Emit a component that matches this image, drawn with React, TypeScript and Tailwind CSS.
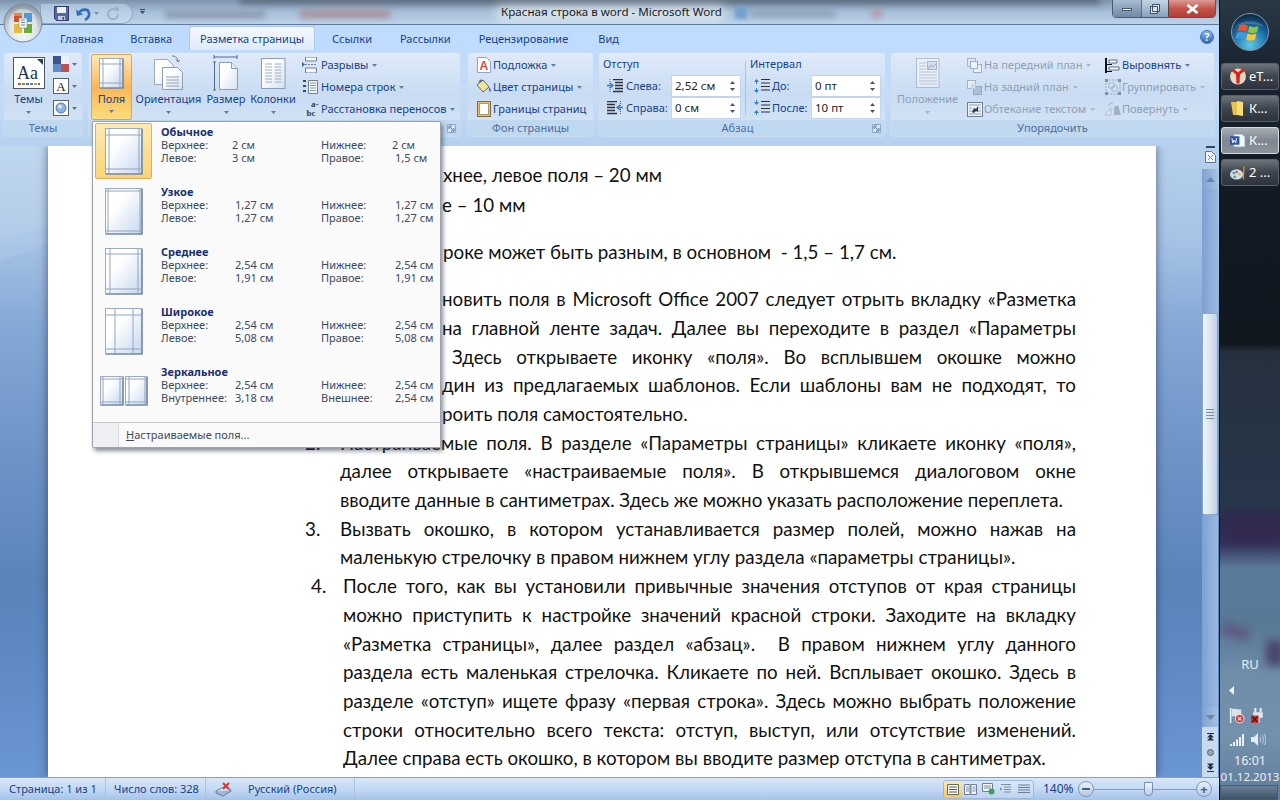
import type { ReactNode } from 'react'

function Caret({ color = '#5f7595' }: { color?: string }) {
  return (
    <svg width="5" height="3" viewBox="0 0 5 3" className="shrink-0">
      <path d="M0 0h5L2.500 3z" fill={color} />
    </svg>
  )
}

function PageGrad({ id, to = '#c4d6ee' }: { id: string; to?: string }) {
  return (
    <defs>
      <linearGradient id={id} x1="0" y1="0" x2="1" y2="1">
        <stop offset="0.35" stopColor="#ffffff" />
        <stop offset="1" stopColor={to} />
      </linearGradient>
    </defs>
  )
}

// page thumbnail with margin guides, used in the ribbon and in the dropdown
function MarginPage({ w = 38, h = 47, l, r, t, b }: { w?: number; h?: number; l: number; r: number; t: number; b: number }) {
  return (
    <svg width={w} height={h} viewBox={`0 0 ${w} ${h}`} className="shrink-0">
      <PageGrad id="mp" />
      <rect x="0.5" y="0.5" width={w - 1.5} height={h - 1.5} fill="url(#mp)" stroke="#9aabc2" />
      <path d={`M${w - 1} 1V${h - 1}H1`} fill="none" stroke="#5f7796" strokeWidth="1.2" />
      <path d={`M${l} 1V${h - 1}M${w - r} 1V${h - 1}M1 ${t}H${w - 1}M1 ${h - b}H${w - 1}`} stroke="#92a5bf" strokeWidth="1" fill="none" />
    </svg>
  )
}

function MirrorPages() {
  return (
    <div className="flex w-[48px] shrink-0 gap-px">
      <MarginPage w={24} h={30} l={3} r={4} t={3} b={4} />
      <MarginPage w={23} h={30} l={4} r={3} t={3} b={4} />
    </div>
  )
}

function OfficeButton() {
  return (
    <svg width="40" height="40" viewBox="0 0 40 40" className="shrink-0">
      <defs>
        <radialGradient id="ob" cx="0.5" cy="0.75" r="0.7">
          <stop offset="0" stopColor="#ffffff" />
          <stop offset="0.55" stopColor="#d4dce4" />
          <stop offset="1" stopColor="#8e99a6" />
        </radialGradient>
      </defs>
      <circle cx="20" cy="20" r="19" fill="url(#ob)" stroke="#7b8794" />
      <circle cx="20" cy="20" r="14" fill="#e8edf1" opacity="0.5" />
      <path d="M11 10h8v9h-8z" fill="#d3542a" />
      <path d="M11 10h8v3h-8z" fill="#e98a3a" />
      <path d="M21 10h8v9h-8z" fill="#4b9bd6" />
      <path d="M11 21h8v9h-8z" fill="#e9b93a" />
      <path d="M21 21h8v9h-8z" fill="#6cae3e" />
      <path d="M16 15h8v10h-8z" fill="#f7f7f2" stroke="#7c8a99" strokeWidth="0.6" />
      <path d="M18 17h4M18 19.5h4M18 22h4" stroke="#5b88b8" strokeWidth="1" />
    </svg>
  )
}

function SaveIcon() {
  return (
    <svg width="15" height="15" viewBox="0 0 15 15">
      <path d="M.5.5h14v14H2.5l-2-2z" fill="#5468a8" stroke="#2f3d74" />
      <path d="M3 1h9v6H3z" fill="#eef2f8" />
      <path d="M4 10h7v4H4z" fill="#c3cbdd" />
      <path d="M8.5 11h1.5v2.5H8.5z" fill="#34406f" />
    </svg>
  )
}

function UndoIcon({ color = '#2d6fb8', opacity = 1 }: { color?: string; opacity?: number }) {
  return (
    <svg width="15" height="14" viewBox="0 0 15 14" opacity={opacity}>
      <path d="M3 6c2-4 9-5 10 0 .6 3-1.5 5.500-4 7" fill="none" stroke={color} strokeWidth="2.600" />
      <path d="M0 2.500l1 6.500 6-1.500z" fill={color} />
    </svg>
  )
}

function RedoIcon() {
  return (
    <svg width="13" height="13" viewBox="0 0 13 13" opacity="0.55">
      <path d="M9.500 3.500A5 5 0 1 0 11 7" fill="none" stroke="#8798ad" strokeWidth="2" />
      <path d="M7.500 0l4.500 .5-.5 4.500z" fill="#8798ad" />
    </svg>
  )
}

function ThemeIcon() {
  return (
    <div className="flex h-[32px] w-[32px] flex-col items-center border border-[#4d5763] bg-white">
      <svg width="30" height="30" viewBox="0 0 30 30">
        <path d="M23 1h6v6z" fill="#33415e" />
        <text x="3" y="21" fontSize="18" fontFamily="Liberation Serif" fill="#22325c">Aa</text>
        <path d="M4 25h3v2H4z" fill="#c9553f" />
        <path d="M8 25h3v2H8z" fill="#6f9a4a" />
        <path d="M12 25h3v2h-3z" fill="#7a5fa3" />
        <path d="M16 25h3v2h-3z" fill="#3f8fb4" />
        <path d="M20 25h3v2h-3z" fill="#e0933a" />
        <path d="M24 25h2v2h-2z" fill="#4a6db0" />
      </svg>
    </div>
  )
}

function ColorsIcon() {
  return (
    <svg width="16" height="16" viewBox="0 0 16 16">
      <path d="M0 0h8v8H0z" fill="#3b5490" />
      <path d="M8 0h8v8H8z" fill="#eef2f8" />
      <path d="M0 8h8v8H0z" fill="#5f8bc8" />
      <path d="M8 8h8v8H8z" fill="#c0504d" />
    </svg>
  )
}

function FontIconBox() {
  return (
    <div className="flex h-[16px] w-[16px] items-center justify-center border border-[#56606d] bg-white font-['Liberation_Serif',serif] text-[13px] leading-none text-[#1b1b1b]">
      A
    </div>
  )
}

function EffectsIconBox() {
  return (
    <div className="flex h-[16px] w-[16px] items-center justify-center border border-[#56606d] bg-white">
      <svg width="12" height="12" viewBox="0 0 12 12">
        <circle cx="6" cy="6" r="5" fill="#8fb2e0" stroke="#4f78b5" />
        <circle cx="5" cy="4.500" r="2" fill="#dce8f7" />
      </svg>
    </div>
  )
}

function OrientIcon() {
  return (
    <svg width="30" height="36" viewBox="0 0 30 36">
      <PageGrad id="ori" to="#d5e0ee" />
      <path d="M.5 4.500h13l6 6v19H.5z" fill="url(#ori)" stroke="#9aa9bd" />
      <path d="M8.500 12.500h15l5 5v17h-20z" fill="url(#ori)" stroke="#8d9db3" />
      <path d="M12 22h13M12 25h13M12 28h13M12 31h13" stroke="#8aa0ba" />
      <path d="M18 1c4 0 5.500 2 6 5M24 7l-2-2.500M24 7l2-2" fill="none" stroke="#5d7da3" />
    </svg>
  )
}

function SizeIcon() {
  return (
    <svg width="26" height="38" viewBox="0 0 26 38">
      <PageGrad id="siz" to="#d5e0ee" />
      <path d="M1 3h23M1 1v4M24 1v4" stroke="#4e6a8e" fill="none" />
      <path d="M1.500 8v28M0 8h3M0 36h3" stroke="#4e6a8e" fill="none" />
      <path d="M6.500 8.500h12l6 6v21h-18z" fill="url(#siz)" stroke="#8d9db3" />
      <path d="M18.500 8.500v6h6" fill="#e9eef5" stroke="#8d9db3" />
    </svg>
  )
}

function ColumnsIcon() {
  return (
    <svg width="25" height="31" viewBox="0 0 25 31">
      <PageGrad id="col" to="#d5e0ee" />
      <rect x="0.500" y="0.500" width="23.500" height="30" fill="url(#col)" stroke="#8d9db3" />
      <path d="M4 6h7M4 9h7M4 12h7M4 15h7M4 18h7M4 21h7M4 24h7M13.500 6h7M13.500 9h7M13.500 12h7M13.500 15h7M13.500 18h7M13.500 21h7M13.500 24h7" stroke="#9db0c6" />
    </svg>
  )
}

function BreaksIcon() {
  return (
    <svg width="16" height="16" viewBox="0 0 16 16">
      <path d="M3.500 0h11v4h-11zM3.500 11h11v5h-11z" fill="#f4f7fb" stroke="#6f7f95" />
      <path d="M3 7.500h12" stroke="#6f7f95" strokeDasharray="2 1" />
      <path d="M0 5v5l3-2.500z" fill="#2f66ac" />
    </svg>
  )
}

function LineNumIcon() {
  return (
    <svg width="16" height="16" viewBox="0 0 16 16">
      <path d="M6.500 1.500h9v13h-9z" fill="#f4f7fb" stroke="#6f7f95" />
      <path d="M8 4h6M8 6.500h6M8 9h6M8 11.500h6" stroke="#8598b0" />
      <path d="M1 1h3v2H1zM1 6h3v2H1zM1 11h3v2H1z" fill="#3a4a62" />
    </svg>
  )
}

function HyphenIcon() {
  return (
    <div className="flex w-[17px] flex-col items-end font-['Liberation_Serif',serif] text-[9px] font-bold leading-[9px] text-[#2f3c52]">
      <span>a-</span>
      <span className="pr-[3px]">bc</span>
    </div>
  )
}

function SheetIcon({ kind }: { kind: 'wm' | 'color' | 'border' }) {
  if (kind === 'color') {
    return (
      <svg width="16" height="16" viewBox="0 0 16 16">
        <path d="M1 6l6-5 6 7-6 5z" fill="#f6e39a" stroke="#6d6a58" />
        <path d="M3 3l3-2" stroke="#4d6ea3" strokeWidth="2" />
        <path d="M13 8c2 2 2.500 3.500 1.500 4.500S12.500 12 13 8z" fill="#3d7cc4" />
      </svg>
    )
  }
  if (kind === 'wm') {
    return (
      <svg width="14" height="16" viewBox="0 0 14 16">
        <path d="M.5.500h9l4 4v11H.5z" fill="#fff" stroke="#94a5ba" />
        <text x="2.500" y="13" fontSize="12" fontFamily="Liberation Sans" fill="#d3484a" fontWeight="700">A</text>
      </svg>
    )
  }
  return (
    <svg width="14" height="16" viewBox="0 0 14 16">
      <rect x="0.500" y="0.500" width="13" height="15" fill="#f0c36a" stroke="#7d6d3d" />
      <rect x="2.500" y="2.500" width="9" height="11" fill="#fff" stroke="#a79a72" />
    </svg>
  )
}

function IndentIcon({ dir, kind }: { dir: 'in' | 'out'; kind: 'indent' | 'space' }) {
  if (kind === 'indent') {
    return (
      <svg width="17" height="14" viewBox="0 0 17 14">
        {dir === 'in' ? (
          <>
            <path d="M6 .5h10M8 3.500h8M8 6.500h8M8 9.500h8M6 12.500h10" stroke="#2c3340" strokeWidth="1.300" />
            <path d="M0 6.500h5M3 4l3 2.500-3 2.500" fill="none" stroke="#3a7ac0" strokeWidth="1.300" />
            <path d="M3 0v13" stroke="#4f5a6a" strokeDasharray="1 1" />
          </>
        ) : (
          <>
            <path d="M0 .5h10M0 3.500h8M0 6.500h8M0 9.500h8M0 12.500h10" stroke="#2c3340" strokeWidth="1.300" />
            <path d="M16 6.500h-5M13 4l-3 2.500 3 2.500" fill="none" stroke="#3a7ac0" strokeWidth="1.300" />
            <path d="M13.500 0v13" stroke="#4f5a6a" strokeDasharray="1 1" />
          </>
        )}
      </svg>
    )
  }
  return (
    <svg width="17" height="16" viewBox="0 0 17 16">
      <path d="M8 1.500h9M8 5h9M8 8.500h9M8 12h9" stroke="#2c3340" strokeWidth="1.200" />
      {dir === 'in' ? (
        <>
          <path d="M3.500 1l2.500 3H1z" fill="#3a7ac0" />
          <path d="M3.500 15L6 12H1z" fill="#3a7ac0" />
          <path d="M3.500 4v2M3.500 10v2" stroke="#3a7ac0" />
        </>
      ) : (
        <>
          <path d="M3.500 5L6 2H1z" fill="#3a7ac0" />
          <path d="M3.500 10l2.500 3H1z" fill="#3a7ac0" />
          <path d="M3.500 0v2M3.500 13v2" stroke="#3a7ac0" />
        </>
      )}
    </svg>
  )
}

function ArrangeIcon({ kind }: { kind: 'front' | 'back' | 'wrap' | 'align' | 'group' | 'rotate' }) {
  if (kind === 'wrap') {
    return (
      <svg width="16" height="15" viewBox="0 0 16 15">
        <rect x="0.500" y="0.500" width="15" height="14" fill="#eef3f9" stroke="#6e7f96" />
        <path d="M2 3h12M2 12h12M2 6h3M11 6h3M2 9h3M11 9h3" stroke="#8ea1b9" />
        <path d="M5 10l2-4 2 1 2-3v6l-2-1-2 2z" fill="#2f3b4d" />
      </svg>
    )
  }
  if (kind === 'align') {
    return (
      <svg width="15" height="15" viewBox="0 0 15 15">
        <path d="M1 0v15" stroke="#111" strokeWidth="2" />
        <path d="M4 2h8v3H4zM4 9h10v3H4z" fill="#fff" stroke="#5b6b82" />
        <path d="M2 6.500h5M2 13.500h5" stroke="#111" />
      </svg>
    )
  }
  if (kind === 'group') {
    return (
      <svg width="16" height="16" viewBox="0 0 16 16" opacity="0.65">
        <path d="M1 1h14v14H1z" fill="none" stroke="#7d8ea3" strokeDasharray="2 1" />
        <path d="M4 4h5v5H4zM7 7h5v5H7z" fill="#e8eef6" stroke="#8699b1" />
        <path d="M0 0h3v3H0zM13 0h3v3h-3zM0 13h3v3H0zM13 13h3v3h-3z" fill="#53667f" />
      </svg>
    )
  }
  if (kind === 'rotate') {
    return (
      <svg width="16" height="14" viewBox="0 0 16 14" opacity="0.7">
        <path d="M0 13h6V6z" fill="#e8eef6" stroke="#a0aebf" />
        <path d="M9 13h7l-3-10-4 2z" fill="#8e9eb3" />
        <path d="M3 4c1-2 3-3 5-3" fill="none" stroke="#8e9eb3" />
      </svg>
    )
  }
  const front = kind === 'front'
  return (
    <svg width="15" height="15" viewBox="0 0 15 15" opacity="0.65">
      <rect x="0.500" y="0.500" width="8" height="8" fill={front ? '#dfe7f1' : '#f2f5f9'} stroke="#8c9cb1" />
      <rect x="6.500" y="6.500" width="8" height="8" fill={front ? '#f2f5f9' : '#9fb0c6'} stroke="#7f90a7" />
      {front ? <rect x="3.500" y="3.500" width="7" height="7" fill="#fafbfd" stroke="#7f90a7" /> : <rect x="3.500" y="3.500" width="5" height="5" fill="#cfd9e6" />}
    </svg>
  )
}

function PositionIcon() {
  return (
    <svg width="24" height="30" viewBox="0 0 24 30" opacity="0.6">
      <rect x="0.500" y="0.500" width="22.500" height="29" fill="#f6f8fb" stroke="#93a4ba" />
      <path d="M3 5h7M3 8h7M3 11h7M3 14h18M3 17h18M3 20h18M3 23h18M3 26h18" stroke="#a0b0c4" />
      <rect x="11.500" y="3.500" width="9" height="8" fill="#d2dbe7" stroke="#8497ae" />
      <path d="M12 11l3-4 2 2 3-3" fill="none" stroke="#6e8199" />
    </svg>
  )
}

function Launcher() {
  return (
    <svg width="9" height="9" viewBox="0 0 9 9" className="shrink-0">
      <path d="M.5.5h8v8h-8z" fill="#d9e6f5" stroke="#8ea8c8" />
      <path d="M2 2h3M2 2v3M3 3l3.500 3.500M7 4v3H4" fill="none" stroke="#5b7ba3" />
    </svg>
  )
}

function Group({ w, label, launcher, children }: { w: string; label: string; launcher?: boolean; children: ReactNode }) {
  return (
    <div className={`${w} flex h-[85px] shrink-0 flex-col overflow-hidden rounded-[3px] border border-[#c6daf0] bg-gradient-to-b from-[#dfeafa] via-[#c9dcf3] to-[#d7e5f6]`}>
      <div className="flex min-h-0 flex-1">{children}</div>
      <div className="flex h-[16px] shrink-0 items-center bg-[#c1d8f1] px-[4px] text-[#4d6f9e]">
        <span className="flex-1 text-center">{label}</span>
        {launcher ? <Launcher /> : null}
      </div>
    </div>
  )
}

function BigButton({ w, icon, label, muted, active }: { w: string; icon: ReactNode; label: string; muted?: boolean; active?: boolean }) {
  return (
    <div className={`${w} flex h-[66px] shrink-0 flex-col items-center rounded-[2px] ${active ? 'mt-[1px] border border-[#dca35a] bg-gradient-to-b from-[#fce9b8] via-[#f9b657] to-[#fbdc7d]' : 'mt-[2px]'}`}>
      <div className="flex h-[36px] items-center justify-center">{icon}</div>
      <div className={`leading-[15px] whitespace-nowrap ${muted ? 'text-[#8e9fb5]' : 'text-[#15428b]'}`}>{label}</div>
      <div className="flex flex-1 items-center pb-[3px]">
        <Caret color={muted ? '#a3b2c6' : '#567db1'} />
      </div>
    </div>
  )
}

function SmallRow({ icon, label, caret = true, tone = 'text-[#15428b]', iconW = 'w-[20px]', gap = 'gap-[4px]' }: { icon: ReactNode; label: string; caret?: boolean; tone?: string; iconW?: string; gap?: string }) {
  return (
    <div className="flex h-[22px] items-center">
      <div className={`${iconW} flex shrink-0 justify-center`}>{icon}</div>
      <div className={`flex items-center ${gap} pl-[1px] whitespace-nowrap ${tone}`}>
        <span>{label}</span>
        {caret ? <Caret color={tone.includes('9') ? '#a9b7c9' : '#5f7fae'} /> : null}
      </div>
    </div>
  )
}

function Spinner({ value }: { value: string }) {
  return (
    <div className="flex h-[22px] w-[70px] items-center justify-between border border-[#c4d5eb] bg-white pl-[3px] pr-[4px] text-[#1e1e1e]">
      <span className="text-[11.500px]">{value}</span>
      <div className="flex flex-col gap-[4px] pr-[1px]">
        <svg width="5" height="3" viewBox="0 0 5 3"><path d="M0 3h5L2.500 0z" fill="#44546c" /></svg>
        <Caret color="#44546c" />
      </div>
    </div>
  )
}

function Ribbon() {
  return (
    <div className="flex h-[96px] shrink-0 items-start gap-0 bg-gradient-to-b from-[#bfdbff] via-[#c6dcf8] to-[#b5d0f0] px-[3px] pt-[2px]">
      <Group w="w-[80px]" label="Темы">
        <div className="flex w-[49px] justify-center">
          <BigButton w="w-[42px]" icon={<ThemeIcon />} label="Темы" />
        </div>
        <div className="flex flex-col">
          {[<ColorsIcon key="c" />, <FontIconBox key="f" />, <EffectsIconBox key="e" />].map((ico, i) => (
            <div key={i} className="flex h-[22px] items-center gap-[3px]">
              {ico}
              <Caret />
            </div>
          ))}
        </div>
      </Group>
      <div className="w-[5px] shrink-0" />
      <Group w="w-[373px]" label="Параметры страницы" launcher>
        <div className="flex pl-[2px]">
          <BigButton active w="w-[41px]" icon={<MarginPage w={25} h={31} l={4} r={4} t={6} b={6} />} label="Поля" />
          <div className="w-[3px]" />
          <BigButton w="w-[67px]" icon={<OrientIcon />} label="Ориентация" />
          <div className="w-[5px]" />
          <BigButton w="w-[38px]" icon={<SizeIcon />} label="Размер" />
          <div className="w-[5px]" />
          <BigButton w="w-[46px]" icon={<ColumnsIcon />} label="Колонки" />
        </div>
        <div className="flex flex-col pl-[4px] pt-[1px]">
          <SmallRow icon={<BreaksIcon />} label="Разрывы" />
          <SmallRow icon={<LineNumIcon />} label="Номера строк" />
          <SmallRow icon={<HyphenIcon />} label="Расстановка переносов" />
        </div>
      </Group>
      <div className="w-[6px] shrink-0" />
      <Group w="w-[127px]" label="Фон страницы">
        <div className="flex flex-col pl-[8px] pt-[1px]">
          <SmallRow iconW="w-[16px]" icon={<SheetIcon kind="wm" />} label="Подложка" />
          <SmallRow iconW="w-[16px]" icon={<SheetIcon kind="color" />} label="Цвет страницы" />
          <SmallRow iconW="w-[16px]" icon={<SheetIcon kind="border" />} label="Границы страниц" caret={false} />
        </div>
      </Group>
      <div className="w-[4px] shrink-0" />
      <Group w="w-[288px]" label="Абзац" launcher>
        <div className="flex flex-col pl-[4px] pt-[1px]">
          <div className="flex h-[21px] items-center text-[#15428b]">Отступ</div>
          <div className="flex h-[22px] items-center">
            <div className="flex w-[22px] justify-center pl-[2px]"><IndentIcon dir="in" kind="indent" /></div>
            <span className="w-[46px] pl-[1px] text-[#15428b]">Слева:</span>
            <Spinner value="2,52 см" />
          </div>
          <div className="flex h-[22px] items-center">
            <div className="flex w-[22px] justify-center pl-[2px]"><IndentIcon dir="out" kind="indent" /></div>
            <span className="w-[46px] pl-[1px] text-[#15428b]">Справа:</span>
            <Spinner value="0 см" />
          </div>
        </div>
        <div className="ml-[4px] mt-[8px] h-[54px] w-px bg-[#a8c2e2]" />
        <div className="flex flex-col pl-[4px] pt-[1px]">
          <div className="flex h-[21px] items-center text-[#15428b]">Интервал</div>
          <div className="flex h-[22px] items-center">
            <div className="flex w-[21px] justify-center pl-[1px]"><IndentIcon dir="in" kind="space" /></div>
            <span className="w-[40px] pl-[1px] text-[#15428b]">До:</span>
            <Spinner value="0 пт" />
          </div>
          <div className="flex h-[22px] items-center">
            <div className="flex w-[21px] justify-center pl-[1px]"><IndentIcon dir="out" kind="space" /></div>
            <span className="w-[40px] pl-[1px] text-[#15428b]">После:</span>
            <Spinner value="10 пт" />
          </div>
        </div>
      </Group>
      <div className="w-[4px] shrink-0" />
      <Group w="w-[325px]" label="Упорядочить">
        <div className="flex pl-[5px]">
          <BigButton muted w="w-[63px]" icon={<PositionIcon />} label="Положение" />
        </div>
        <div className="flex w-[145px] flex-col pl-[7px] pt-[1px]">
          <SmallRow iconW="w-[17px]" tone="text-[#8e9fb5]" icon={<ArrangeIcon kind="front" />} label="На передний план" />
          <SmallRow iconW="w-[17px]" tone="text-[#8e9fb5]" icon={<ArrangeIcon kind="back" />} label="На задний план" />
          <SmallRow iconW="w-[17px]" tone="text-[#8e9fb5]" icon={<ArrangeIcon kind="wrap" />} label="Обтекание текстом" />
        </div>
        <div className="flex flex-col pt-[1px]">
          <SmallRow iconW="w-[17px]" icon={<ArrangeIcon kind="align" />} label="Выровнять" />
          <SmallRow iconW="w-[17px]" tone="text-[#8e9fb5]" icon={<ArrangeIcon kind="group" />} label="Группировать" />
          <SmallRow iconW="w-[17px]" tone="text-[#8e9fb5]" icon={<ArrangeIcon kind="rotate" />} label="Повернуть" />
        </div>
      </Group>
    </div>
  )
}

function TitleBar() {
  return (
    <div className="relative h-[25px] shrink-0 overflow-hidden border-b border-[#5f7a99] bg-gradient-to-b from-[#7e94ad] via-[#a7bfd8] to-[#bdd3ea]">
      <div className="absolute left-[240px] top-[-4px] h-[8px] w-[860px] bg-[#5c6b7e] blur-[3px]" />
      <div className="absolute left-[165px] top-[11px] h-[7px] w-[100px] bg-[#8796a9] blur-[3px]" />
      <div className="absolute left-[300px] top-[10px] h-[8px] w-[90px] bg-[#a88f9a] blur-[3px]" />
      <div className="absolute left-[735px] top-[7px] h-[12px] w-[12px] bg-[#6e9fcf] blur-[2px]" />
      <div className="absolute left-[750px] top-[10px] h-[7px] w-[85px] bg-[#8c9fb6] blur-[3px]" />
      <div className="absolute left-[872px] top-[10px] h-[7px] w-[10px] bg-[#b58f98] blur-[3px]" />
      <div className="absolute left-[497px] top-[6px] h-[14px] w-[228px] bg-white/60 blur-[6px]" />
      <div className="relative flex h-full items-center pl-[501px] text-[11.600px] text-[#1a1a1a]">Красная строка в word - Microsoft Word</div>
      <div className="absolute left-[40px] top-[3px] flex h-[21px] w-[93px] items-center rounded-r-[11px] border border-[#8ea3bd] bg-[#cddff3]/50 pl-[13px]">
        <SaveIcon />
        <div className="w-[7px]" />
        <UndoIcon />
        <div className="w-[3px]" />
        <Caret color="#7d90a8" />
        <div className="w-[8px]" />
        <RedoIcon />
      </div>
      <div className="absolute left-[140px] top-[9px] flex flex-col items-center gap-px">
        <div className="h-px w-[5px] bg-[#33465e]" />
        <Caret color="#33465e" />
      </div>
      <div className="absolute left-[1112px] top-[-1px] flex h-[19px] overflow-hidden rounded-b-[4px] border border-[#4c5a6b]">
        <div className="flex w-[28px] items-center justify-center bg-gradient-to-b from-[#a9bdd2] to-[#6f89a7]">
          <div className="mt-[2px] h-[3px] w-[10px] border border-[#46566a] bg-white" />
        </div>
        <div className="flex w-[27px] items-center justify-center border-l border-[#5c6d82] bg-gradient-to-b from-[#c5d5e5] to-[#86a0bc]">
          <svg width="10" height="10" viewBox="0 0 10 10">
            <path d="M2.500.5h7v7h-7zM.5 2.500h7v7h-7z" fill="#dfe7f0" stroke="#3f4f63" />
          </svg>
        </div>
        <div className="flex w-[47px] items-center justify-center border-l border-[#5c4140] bg-gradient-to-b from-[#dc9a92] via-[#c2564d] to-[#b43c32]">
          <svg width="13" height="10" viewBox="0 0 13 10">
            <path d="M1.500 1l10 8M11.500 1l-10 8" stroke="#fff" strokeWidth="2.800" />
          </svg>
        </div>
      </div>
    </div>
  )
}

const TABS: [string, string][] = [
  ['Главная', 'ml-[60px]'],
  ['Вставка', 'ml-[27px]'],
]

const TABS_AFTER: [string, string][] = [
  ['Ссылки', 'ml-[17px]'],
  ['Рассылки', 'ml-[28px]'],
  ['Рецензирование', 'ml-[28px]'],
  ['Вид', 'ml-[30px]'],
]

function TabsRow() {
  return (
    <div className="relative flex h-[25px] shrink-0 items-end bg-[#bfdbff] text-[#15428b]">
      {TABS.map(([label, ml]) => (
        <div key={label} className={`flex h-[23px] items-center whitespace-nowrap pt-[1px] ${ml}`}>{label}</div>
      ))}
      <div className="ml-[17px] flex h-[24px] w-[126px] items-center justify-center rounded-t-[3px] border border-b-0 border-[#a9c7ea] bg-gradient-to-b from-[#f4f9ff] to-[#dfeafa] pt-[1px]">Разметка страницы</div>
      {TABS_AFTER.map(([label, ml]) => (
        <div key={label} className={`flex h-[23px] items-center whitespace-nowrap pt-[1px] ${ml}`}>{label}</div>
      ))}
      <div className="absolute left-[1200px] top-[5px] flex h-[14px] w-[14px] items-center justify-center rounded-full border border-[#3c6fb5] bg-gradient-to-b from-[#8fb9ea] to-[#2a64b8] text-[10px] font-bold leading-none text-white">?</div>
    </div>
  )
}

const MARGINS = [
  { name: 'Обычное', l1: 'Верхнее:', l2: 'Левое:', r1: 'Нижнее:', r2: 'Правое:', a: '2 см', b: '3 см', c: '2 см', d: '1,5 см', page: { l: 4, r: 4, t: 7, b: 6 }, narrow: true, on: true },
  { name: 'Узкое', l1: 'Верхнее:', l2: 'Левое:', r1: 'Нижнее:', r2: 'Правое:', a: '1,27 см', b: '1,27 см', c: '1,27 см', d: '1,27 см', page: { l: 3, r: 3, t: 3, b: 4 } },
  { name: 'Среднее', l1: 'Верхнее:', l2: 'Левое:', r1: 'Нижнее:', r2: 'Правое:', a: '2,54 см', b: '1,91 см', c: '2,54 см', d: '1,91 см', page: { l: 5, r: 5, t: 6, b: 6 } },
  { name: 'Широкое', l1: 'Верхнее:', l2: 'Левое:', r1: 'Нижнее:', r2: 'Правое:', a: '2,54 см', b: '5,08 см', c: '2,54 см', d: '5,08 см', page: { l: 10, r: 10, t: 7, b: 6 } },
  { name: 'Зеркальное', l1: 'Верхнее:', l2: 'Внутреннее:', r1: 'Нижнее:', r2: 'Внешнее:', a: '2,54 см', b: '3,18 см', c: '2,54 см', d: '2,54 см', mirror: true },
]

function MarginsMenu() {
  return (
    <div className="absolute left-[92px] top-[121px] z-20 w-[349px] rounded-[2px] border border-[#9aa4b0] bg-[#fafafa] shadow-[2px_3px_4px_rgba(40,50,70,0.55)]">
      <div className="flex flex-col px-[2px] pt-[1px]">
        {MARGINS.map(m => (
          <div key={m.name} className="flex h-[60px] items-start">
            <div className={`flex h-[56px] w-[57px] shrink-0 items-center justify-center rounded-[2px] ${m.on ? 'border border-[#e0ae5e] bg-gradient-to-b from-[#fde9b0] to-[#fbd477]' : ''}`}>
              {m.mirror ? <MirrorPages /> : <MarginPage l={m.page!.l} r={m.page!.r} t={m.page!.t} b={m.page!.b} />}
            </div>
            <div className="flex-1 pl-[9px] pt-[2px] text-[#3c4a5e]">
              <div className="h-[13px] text-[11px] font-bold leading-[13px] text-[#172f70]">{m.name}</div>
              {[[m.l1, m.a, m.r1, m.c], [m.l2, m.b, m.r2, m.d]].map((row, i) => (
                <div key={i} className="flex h-[13px] leading-[13px]">
                  <span className="w-[74px]">{row[0]}</span>
                  <span className={`w-[86px] ${m.narrow ? 'ml-[-3px]' : ''}`}>{row[1]}</span>
                  <span className={`w-[74px] ${m.narrow ? 'ml-[3px]' : ''}`}>{row[2]}</span>
                  <span className={m.narrow && row[3] === '2 см' ? 'ml-[-3px]' : ''}>{row[3]}</span>
                </div>
              ))}
            </div>
          </div>
        ))}
      </div>
      <div className="mt-[-1px] flex h-[25px] border-t border-[#c5c8cd]">
        <div className="w-[26px] border-r border-[#d9dcdf] bg-[#eef0f1]" />
        <div className="flex items-center pl-[7px] text-[#3c4a5e]">
          <span><span className="underline">Н</span>астраиваемые поля...</span>
        </div>
      </div>
    </div>
  )
}

// only the part of each line that shows to the right of the open menu
const BEHIND_MENU: { t: string; just?: boolean; pl?: string }[] = [
  { t: 'новить поля в Microsoft Office 2007 следует отрыть вкладку «Разметка', just: true },
  { t: 'на главной ленте задач. Далее вы переходите в раздел «Параметры', just: true },
  { t: 'Здесь открываете иконку «поля». Во всплывшем окошке можно', just: true, pl: 'pl-[404px]' },
  { t: 'дин из предлагаемых шаблонов. Если шаблоны вам не подходят, то', just: true },
  { t: 'роить поля самостоятельно.' },
]

const LINES: { n?: string; t: string; just?: boolean }[] = [
  { n: '2.', t: 'Настраиваемые поля. В разделе «Параметры страницы» кликаете иконку «поля»,', just: true },
  { t: 'далее открываете «настраиваемые поля». В открывшемся диалоговом окне', just: true },
  { t: 'вводите данные в сантиметрах. Здесь же можно указать расположение переплета.' },
  { n: '3.', t: 'Вызвать окошко, в котором устанавливается размер полей, можно нажав на', just: true },
  { t: 'маленькую стрелочку в правом нижнем углу раздела «параметры страницы».' },
]

const LINES_4 = [
  { t: 'После того, как вы установили привычные значения отступов от края страницы', just: true, n: '4.' },
  { t: 'можно приступить к настройке значений красной строки. Заходите на вкладку', just: true },
  { t: '«Разметка страницы», далее раздел «абзац».  В правом нижнем углу данного', just: true },
  { t: 'раздела есть маленькая стрелочка. Кликаете по ней. Всплывает окошко. Здесь в', just: true },
  { t: 'разделе «отступ» ищете фразу «первая строка». Здесь можно выбрать положение', just: true },
  { t: 'строки относительно всего текста: отступ, выступ, или отсутствие изменений.', just: true },
  { t: 'Далее справа есть окошко, в котором вы вводите размер отступа в сантиметрах.' },
]

function DocPage() {
  return (
    <div className="relative w-[1108px] shrink-0 self-stretch bg-white pt-[14px] font-['Lato',sans-serif] text-[18.750px] text-[#111] shadow-[0_0_9px_rgba(30,45,70,0.65)]">
      <div className="flex h-[30px] items-center pl-[395px] whitespace-pre">хнее, левое поля – 20 мм</div>
      <div className="flex h-[30px] items-center pl-[394px] whitespace-pre">е – 10 мм</div>
      <div className="mt-[17px] flex h-[30px] items-center pl-[395px] whitespace-pre">роке может быть разным, в основном  - 1,5 – 1,7 см.</div>
      <div className="mt-[18px]">
        {BEHIND_MENU.map((l, i) => (
          <div key={i} className={`flex h-[28.700px] items-center ${l.pl ?? 'pl-[394px]'}`}>
            <span className={`flex-1 pr-[80px] ${l.just ? '[text-align-last:justify]' : ''}`}>{l.t}</span>
          </div>
        ))}
        {LINES.map((l, i) => (
          <div key={i} className="flex h-[28.700px] items-center pl-[257px]">
            <span className="w-[35px] shrink-0">{l.n}</span>
            <span className={`w-[736px] whitespace-pre-wrap ${l.just ? '[text-align-last:justify]' : ''}`}>{l.t}</span>
          </div>
        ))}
        {LINES_4.map((l, i) => (
          <div key={i} className="flex h-[28.700px] items-center pl-[263px]">
            <span className="w-[32px] shrink-0">{l.n}</span>
            <span className={`w-[733px] whitespace-pre-wrap ${l.just ? '[text-align-last:justify]' : ''}`}>{l.t}</span>
          </div>
        ))}
      </div>
    </div>
  )
}

function ScrollTrack() {
  return (
    <div className="flex w-[16px] shrink-0 flex-col self-stretch">
      <div className="flex h-[23px] flex-col items-center">
        <svg width="11" height="2" viewBox="0 0 11 2"><path d="M1 0h9v2H1z" fill="#2f4b6b" /></svg>
        <svg width="11" height="12" viewBox="0 0 11 12" className="mt-[3px]">
          <path d="M.5.5h6l4 4v7h-10z" fill="#eef3f9" stroke="#62758c" />
          <path d="M3 4l5 5M8 4l-5 5" stroke="#7e8fa4" />
        </svg>
      </div>
      <div className="flex h-[20px] items-center justify-center bg-gradient-to-r from-[#7fa2d2] to-[#a6c1e6]">
        <svg width="9" height="5" viewBox="0 0 9 5"><path d="M0 5h9L4.500 0z" fill="#6c86a8" /></svg>
      </div>
      <div className="h-[124px] bg-gradient-to-r from-[#7ea1d2] to-[#9bb8e0]" />
      <div className="flex h-[202px] flex-col items-center justify-center gap-[2px] rounded-[2px] border border-[#8ea6c6] bg-gradient-to-r from-[#f0f5fb] via-[#dbe5f1] to-[#c1d0e2]">
        <div className="h-px w-[8px] bg-[#7b8ea6]" />
        <div className="h-px w-[8px] bg-[#7b8ea6]" />
        <div className="h-px w-[8px] bg-[#7b8ea6]" />
        <div className="h-px w-[8px] bg-[#7b8ea6]" />
      </div>
      <div className="h-[192px] bg-gradient-to-r from-[#7ea1d2] to-[#9bb8e0]" />
      <div className="flex h-[20px] items-center justify-center bg-gradient-to-r from-[#7fa2d2] to-[#a6c1e6]">
        <svg width="9" height="5" viewBox="0 0 9 5"><path d="M0 0h9L4.500 5z" fill="#6c86a8" /></svg>
      </div>
      <div className="flex flex-1 flex-col items-center justify-around bg-[#c8daf0] py-[2px]">
        <svg width="9" height="9" viewBox="0 0 9 9"><path d="M4.500 1l3.500 3.500H1zM4.500 4l3.500 3.500H1z" fill="#1e2d44" /><path d="M1 .5h7" stroke="#1e2d44" /></svg>
        <div className="h-[7px] w-[7px] rounded-full border border-[#5a6675] bg-[#9aa6b4]" />
        <svg width="9" height="9" viewBox="0 0 9 9"><path d="M4.500 4L8 .5H1zM4.500 7L8 3.500H1z" fill="#1e2d44" /><path d="M1 8.500h7" stroke="#1e2d44" /></svg>
      </div>
    </div>
  )
}

function StatusBar() {
  return (
    <div className="flex h-[23px] shrink-0 items-center border-t border-[#7da0cc] bg-gradient-to-b from-[#d8e7fa] via-[#c4d9f4] to-[#a5c3ea] text-[11px] text-[#15428b]">
      <div className="flex h-full w-[106px] items-center border-r border-[#a8c2e4] pl-[9px]">Страница: 1 из 1</div>
      <div className="flex h-full w-[100px] items-center border-r border-[#a8c2e4] pl-[8px]">Число слов: 328</div>
      <div className="flex h-full w-[149px] items-center gap-[16px] border-r border-[#a8c2e4] pl-[9px]">
        <svg width="17" height="15" viewBox="0 0 17 15" className="shrink-0">
          <path d="M1 9l8-4 7 3-8 5z" fill="#e8eef7" stroke="#5f7a9f" />
          <path d="M1 9v2l7 3 8-5V8" fill="#9fb9dc" stroke="#5f7a9f" />
          <path d="M8 1l6 6M14 1L8 7" stroke="#d7362c" strokeWidth="2" />
        </svg>
        <span>Русский (Россия)</span>
      </div>
      <div className="flex-1" />
      <div className="flex h-[19px] w-[91px] items-center overflow-hidden rounded-[3px] border border-[#9db8dc] bg-gradient-to-b from-[#dbe8f8] to-[#bcd3ef]">
        <div className="flex h-full w-[18px] items-center justify-center bg-gradient-to-b from-[#fde9b0] to-[#f9c35e]">
          <svg width="12" height="11" viewBox="0 0 12 11"><path d="M.5.500h11v10H.5z" fill="#fff" stroke="#6b6b5c" /><path d="M2 3h8M2 5.500h8M2 8h8" stroke="#555" /></svg>
        </div>
        <div className="flex h-full w-[18px] items-center justify-center">
          <svg width="13" height="11" viewBox="0 0 13 11"><path d="M.5.500h5.500v10H.5zM7 .5h5.500v10H7z" fill="#f3f6fa" stroke="#6d7f96" /><path d="M2 3h3M2 5h3M2 7h3M8.500 3h3M8.500 5h3M8.500 7h3" stroke="#7f8fa5" /></svg>
        </div>
        <div className="flex h-full w-[18px] items-center justify-center">
          <svg width="13" height="12" viewBox="0 0 13 12"><path d="M.5.500h10v8H.5z" fill="#f3f6fa" stroke="#6d7f96" /><path d="M2 3h7M2 5h7" stroke="#7f8fa5" /><circle cx="9.500" cy="8.500" r="3" fill="#3e9a62" /></svg>
        </div>
        <div className="flex h-full w-[18px] items-center justify-center">
          <svg width="12" height="10" viewBox="0 0 12 10"><path d="M1 .5h10M4 3h7M4 5.500h7M4 8h7" stroke="#7b8da6" /><path d="M0 3v4l2-2z" fill="#7b8da6" /></svg>
        </div>
        <div className="flex h-full w-[18px] items-center justify-center">
          <svg width="12" height="10" viewBox="0 0 12 10"><path d="M0 1h12M0 3.500h12M0 6h12M0 8.500h12" stroke="#6d7f96" /></svg>
        </div>
      </div>
      <span className="ml-[9px] w-[28px] text-[12px]">140%</span>
      <div className="ml-[7px] flex w-[134px] items-center">
        <div className="flex h-[16px] w-[16px] shrink-0 items-center justify-center rounded-full border border-[#7d97b9] bg-gradient-to-b from-[#eaf2fb] to-[#b3c9e6]">
          <div className="h-[2px] w-[8px] bg-[#4a5d78]" />
        </div>
        <div className="relative h-px flex-1 bg-[#7f9cc3]">
          <div className="absolute left-[50px] top-[-7px] h-[14px] w-[9px] rounded-b-[4px] border border-[#7a90ad] bg-gradient-to-b from-[#f2f6fb] to-[#bccde3]" />
        </div>
        <div className="flex h-[16px] w-[16px] shrink-0 items-center justify-center rounded-full border border-[#7d97b9] bg-gradient-to-b from-[#eaf2fb] to-[#b3c9e6] text-[13px] font-bold leading-none text-[#4a5d78]">+</div>
      </div>
      <div className="w-[7px]" />
    </div>
  )
}

function TaskBtn({ icon, label, active }: { icon: ReactNode; label: string; active?: boolean }) {
  return (
    <div className={`flex h-[27px] items-center gap-[3px] rounded-[3px] border pl-[8px] text-[13px] text-white ${active ? 'border-[#d5dbe2] bg-gradient-to-b from-[#a9afb6] via-[#7e868f] to-[#8b929a]' : 'border-[#58626e] bg-gradient-to-b from-[#6e747b] via-[#3d444d] to-[#2c333c]'}`}>
      <div className="flex w-[16px] justify-center">{icon}</div>
      <span>{label}</span>
    </div>
  )
}

function Taskbar() {
  return (
    <div className="relative flex w-[61px] shrink-0 flex-col overflow-hidden border-l border-[#10161f] bg-[linear-gradient(to_bottom,#2a3846_0%,#1a2531_8%,#111a24_25%,#10171f_43%,#26313f_44%,#27364a_63%,#2e2a4e_65%,#33315a_68%,#5a7b9a_71%,#587996_78%,#6f8ca9_84%,#7390ac_92%,#5f7d9c_100%)] font-['Noto_Sans',sans-serif] text-white">
      <div className="absolute left-[2px] top-[626px] h-[12px] w-[28px] rotate-[15deg] bg-[#5c3f6e]/60 blur-[5px]" />
      <div className="absolute left-[46px] top-[640px] h-[26px] w-[18px] bg-[#41345f]/80 blur-[5px]" />
      <div className="absolute left-[10px] top-[520px] h-[20px] w-[50px] bg-[#33294f] blur-[5px]" />
      <div className="relative flex h-[63px] items-center justify-center">
        <svg width="38" height="38" viewBox="0 0 38 38">
          <defs>
            <radialGradient id="orb" cx="0.5" cy="0.85" r="0.8">
              <stop offset="0" stopColor="#62c8ea" />
              <stop offset="0.6" stopColor="#1a6ea8" />
              <stop offset="1" stopColor="#0b2a47" />
            </radialGradient>
          </defs>
          <circle cx="19" cy="19" r="18.500" fill="url(#orb)" stroke="#8698a9" />
          <path d="M8 13c3-2 6-2 9-.5l-1.500 6c-3-1.500-6-1.500-9 0z" fill="#e8542e" />
          <path d="M18.500 13c3 1.500 6 1.500 9 0l-1.500 6c-3 1.500-6 1.500-9 0z" fill="#8dc63f" />
          <path d="M6 20c3-1.500 6-1.500 9 0l-1.500 6c-3-1.500-6-1.500-9 0z" fill="#3d9ae0" />
          <path d="M16.500 20.500c3 1.500 6 1.500 9 0L24 26.500c-3 1.500-6 1.500-9 0z" fill="#fcc42f" />
          <path d="M5 14a15 9 0 0 1 28 0c-8-4-20-4-28 0z" fill="#fff" opacity="0.18" />
        </svg>
      </div>
      <div className="relative flex flex-col gap-[5px] px-[1px]">
        <TaskBtn label="eT..." icon={
          <svg width="16" height="17" viewBox="0 0 16 17">
            <circle cx="8" cy="8.500" r="8" fill="#e8d6c4" />
            <path d="M1 2.500l5 4 .5 9h3L10 6.500l5-4-2.500-2L8 4.500 3.500.5z" fill="#d8231d" />
          </svg>
        } />
        <TaskBtn label="К..." icon={
          <svg width="14" height="17" viewBox="0 0 14 17">
            <path d="M0 2h8v13H2z" fill="#e6c14f" />
            <path d="M6 1l6 1v14l-6-1z" fill="#f6de7e" />
          </svg>
        } />
        <TaskBtn active label="К..." icon={
          <svg width="17" height="17" viewBox="0 0 17 17">
            <path d="M4 1.500h9l3 3v11H4z" fill="#f4f7fb" stroke="#8c9aac" />
            <path d="M0 4h10v9H0z" fill="#2f55ad" />
            <path d="M2 6l1 5 1.500-3L6 11l1-5" fill="none" stroke="#fff" />
          </svg>
        } />
        <TaskBtn label="2 ..." icon={
          <svg width="17" height="16" viewBox="0 0 17 16">
            <ellipse cx="7" cy="9.500" rx="7" ry="5.500" fill="#cfdde9" />
            <circle cx="4" cy="8" r="1.300" fill="#3f8ed0" />
            <circle cx="7" cy="7" r="1.300" fill="#d94a3a" />
            <circle cx="10" cy="9" r="1.300" fill="#e7b52e" />
            <circle cx="5" cy="12" r="1.300" fill="#4d9e4a" />
            <path d="M14 1l1.500 0-.5 14h-1.500z" fill="#dc8a2a" />
          </svg>
        } />
      </div>
      <div className="flex-1" />
      <div className="relative flex h-[24px] items-center justify-center text-[13px] text-[#e4ebf2]">RU</div>
      <div className="relative flex h-[26px] items-center pl-[9px]">
        <svg width="5" height="9" viewBox="0 0 5 9"><path d="M5 0v9L0 4.500z" fill="#eef2f6" /></svg>
      </div>
      <div className="relative flex h-[24px] items-center justify-between pl-[8px] pr-[14px]">
        <svg width="18" height="17" viewBox="0 0 16 16">
          <path d="M2 1v14" stroke="#e9eef3" strokeWidth="1.500" />
          <path d="M3 2c3-1 5 1 9 0v7c-4 1-6-1-9 0z" fill="#dbe2ea" />
          <circle cx="10.500" cy="11" r="4" fill="#cf3a3a" stroke="#f4dada" />
          <path d="M9 9.500l3 3M12 9.500l-3 3" stroke="#fff" />
        </svg>
        <svg width="16" height="17" viewBox="0 0 15 16">
          <path d="M3 5h9v5H9v5H6v-5H3z" fill="#e3e8ee" />
          <path d="M5 1v4M10 1v4" stroke="#e3e8ee" strokeWidth="2" />
          <path d="M1 8h7v7H1z" fill="#cf2a2a" />
          <path d="M2 9l5 5M7 9l-5 5" stroke="#2a1212" />
        </svg>
      </div>
      <div className="relative flex h-[25px] items-center justify-between pl-[10px] pr-[14px]">
        <svg width="14" height="12" viewBox="0 0 14 12">
          <path d="M0 10h2v2H0zM3 8h2v4H3zM6 5.500h2V12H6zM9 3h2v9H9zM12 0h2v12h-2z" fill="#eef2f6" />
        </svg>
        <svg width="15" height="13" viewBox="0 0 15 13">
          <path d="M0 4h3l4-4v13L3 9H0z" fill="#e6ebf0" />
          <path d="M9 4c1 1.500 1 3.500 0 5M11 2.500c2 2 2 6 0 8M13 1c2.500 3 2.500 8 0 11" fill="none" stroke="#cbd4de" />
        </svg>
      </div>
      <div className="relative text-center text-[12.500px] leading-[17px] text-[#eef2f6]">16:01</div>
      <div className="relative text-center text-[11.500px] leading-[16px] text-[#eef2f6]">01.12.2013</div>
      <div className="relative mr-[2px] h-[15px] border border-[#4a5a6e] bg-gradient-to-b from-[#6e8198] to-[#3c5068]" />
    </div>
  )
}

export default function App() {
  return (
    <div className="flex h-[800px] w-[1280px] overflow-hidden bg-[#1a2a3a] font-['Noto_Sans',sans-serif] text-[11px]">
      <div className="relative flex w-[1219px] shrink-0 flex-col bg-[#bfdbff]">
        <TitleBar />
        <TabsRow />
        <Ribbon />
        <div className="flex min-h-0 flex-1 overflow-hidden bg-[linear-gradient(to_bottom,#b7d1ed_0%,#a6c3e6_15%,#86a9d6_28%,#7499cb_43%,#5a84ba_69%,#5d88c3_80%,#6b96d4_100%)]">
          <div className="w-[48px] shrink-0">
            <svg width="48" height="120" viewBox="0 0 48 120">
              <path d="M0 0h48v97L0 116z" fill="#fff" opacity="0.08" />
              <path d="M0 0h48v79L0 94z" fill="#fff" opacity="0.07" />
            </svg>
          </div>
          <DocPage />
          <div className="w-[46px] shrink-0" />
          <ScrollTrack />
          <div className="w-px shrink-0" />
        </div>
        <StatusBar />
        <div className="absolute left-[3px] top-[3px] z-10">
          <OfficeButton />
        </div>
        <MarginsMenu />
      </div>
      <Taskbar />
    </div>
  )
}
